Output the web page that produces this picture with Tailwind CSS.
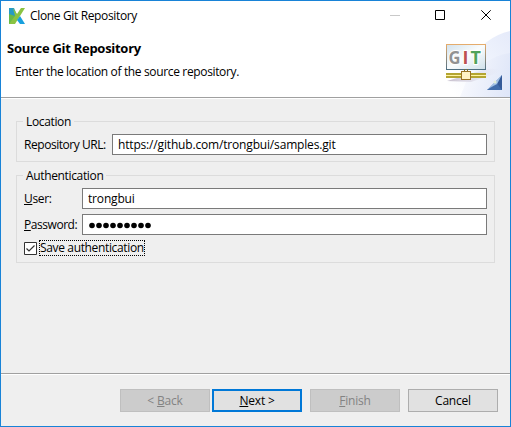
<!DOCTYPE html>
<html lang="en">
<head>
<meta charset="utf-8">
<title>Clone Git Repository</title>
<script src="https://cdn.jsdelivr.net/npm/@tailwindcss/browser@4"></script>
</head>
<body class="overflow-hidden">
<main class="w-[511px] h-[427px] border border-[#1883d7] bg-[#efefef] flex flex-col font-['Open_Sans','Noto_Sans',sans-serif] text-[12px] leading-4 text-black tracking-[-0.35px] whitespace-nowrap">
  <header class="relative h-[96px] shrink-0 bg-white">
    <svg class="absolute right-0 top-0" width="100" height="96" viewBox="410 1 100 96">
      <defs>
        <linearGradient id="sky" gradientUnits="userSpaceOnUse" x1="510" y1="35" x2="450" y2="90"><stop offset="0" stop-color="#e6ebfa"/><stop offset=".5" stop-color="#f1f5fd"/><stop offset="1" stop-color="#fff"/></linearGradient>
        <linearGradient id="sky2" gradientUnits="userSpaceOnUse" x1="510" y1="85" x2="466" y2="75"><stop offset="0" stop-color="#dfe6f8"/><stop offset="1" stop-color="#f5f7fd"/></linearGradient>
        <linearGradient id="screen" x1="0" y1="0" x2="1" y2="1"><stop offset="0" stop-color="#d3e2ed"/><stop offset=".5" stop-color="#f9fcfd"/><stop offset="1" stop-color="#cfe0ea"/></linearGradient>
        <linearGradient id="edge" x1="0" y1="0" x2="0" y2="1"><stop offset="0" stop-color="#e5ac6c"/><stop offset="1" stop-color="#507085"/></linearGradient>
        <linearGradient id="shadow"><stop offset="0" stop-color="#c5bdcc"/><stop offset="1" stop-color="#dfdeed" stop-opacity="0"/></linearGradient>
        <linearGradient id="blue" x1="0" y1="0" x2="1" y2="1"><stop offset="0" stop-color="#c2daf5"/><stop offset="1" stop-color="#2456a0"/></linearGradient>
      </defs>
      <path d="M510 31Q484 37 470 62Q452 80 430 97H510Z" fill="url(#sky)"/>
      <path d="M510 53Q484 57 466 82L460 97H510Z" fill="url(#sky2)"/>
      <path d="M447 81L487 69Q506 68 497 73L471 82Z" fill="url(#shadow)"/>
      <rect x="446.5" y="44.5" width="39" height="25" fill="url(#screen)" stroke="url(#edge)"/>
      <path d="M446 69.5H486" stroke="#4e6e80"/>
      <g font-family="Open Sans" font-size="18" font-weight="700" stroke="white" stroke-width="2" paint-order="stroke" letter-spacing="0">
        <text x="448.5" y="63.5" textLength="12" lengthAdjust="spacingAndGlyphs" fill="#929292">G</text><text x="462.5" y="63.5" fill="#bd5151">I</text><text x="470.5" y="63.5" fill="#51a35b">T</text>
      </g>
      <path d="M446 73H486V78H446Z" fill="#b4a532"/><path d="M446 75.5H486" stroke="#fff3a0"/>
      <path d="M464.5 69V72M467.5 69V72" stroke="#827126"/>
      <rect x="461.5" y="71.5" width="9" height="8" fill="#fff2c6" stroke="#9b7427"/>
      <path d="M502 75V90H487Z" fill="url(#blue)"/><path d="M502 75L497 84L502 90Z" fill="#355a98"/><path d="M487 90L497 84L502 90Z" fill="#416dab"/><path d="M501 76L489 88L497 84Z" fill="#a3c1e4"/><circle cx="495" cy="82" r="1.5" fill="#e2efd8"/>
    </svg>
    <div class="relative h-[30px] flex items-center">
      <svg class="ml-2" width="16" height="16" viewBox="0 0 16 16"><path d="M0 0H5L8 7L0 15Z" fill="#269bc5"/><path d="M0 6L6 8L5 16H0Z" fill="#68b848"/><path d="M4 0L8 6L12 0H16L6 16H0L6 8Z" fill="#8ac343"/><path d="M11 8L16 16H11L8 12Z" fill="#18a0de"/></svg>
      <span class="ml-[5px]">Clone Git Repository</span>
      <svg class="absolute right-0 top-0" width="140" height="29" viewBox="371 1 140 29" fill="none"><path d="M391 15.5H401" stroke="#c9c9c9"/><path d="M436.5 10.5H445.5V19.5H436.5Z" stroke="#000"/><path d="M482.3 10.3L491.7 19.7M491.7 10.3L482.3 19.7" stroke="#000"/></svg>
    </div>
    <h1 class="relative pl-[6px] mt-[9px] text-[13px] font-bold tracking-[-0.28px]">Source Git Repository</h1>
    <p class="relative pl-[14px] mt-2">Enter the location of the source repository.</p>
  </header>
  <div class="h-[2px] shrink-0 border-t border-[#a0a0a0] bg-white"></div>
  <form class="h-[274px] shrink-0 pt-[22px] pl-[15px] pr-[15px]">
    <section class="relative h-[41px] border border-[#dcdcdc] px-[7px] pt-3">
      <h2 class="absolute left-[6px] -top-2 bg-[#efefef] px-[3px]">Location</h2>
      <label class="flex items-center"><span class="w-[88px] tracking-[-0.45px]">Repository URL:</span><input class="w-[375px] h-[21px] border border-[#7a7a7a] bg-white px-[5px] tracking-[-0.17px] outline-none" value="https://github.com/trongbui/samples.git"></label>
    </section>
    <section class="relative mt-[13px] h-[88px] border border-[#dcdcdc] px-[7px] pt-3">
      <h2 class="absolute left-[6px] -top-2 bg-[#efefef] px-[3px]">Authentication</h2>
      <label class="flex items-center"><span class="w-[58px]"><u>U</u>ser:</span><input class="w-[405px] h-[21px] border border-[#7a7a7a] bg-white px-[5px] tracking-[-0.17px] outline-none" value="trongbui"></label>
      <label class="mt-[5px] flex items-center"><span class="w-[58px] tracking-[-0.45px]"><u>P</u>assword:</span><span class="flex w-[405px] h-[21px] items-center border border-[#7a7a7a] bg-white pl-[6px] pt-px">
        <svg width="63" height="7" viewBox="0 0 63 7"><g fill="#000"><circle cx="3" cy="3.5" r="2.8"/><circle cx="10" cy="3.5" r="2.8"/><circle cx="17" cy="3.5" r="2.8"/><circle cx="24" cy="3.5" r="2.8"/><circle cx="31" cy="3.5" r="2.8"/><circle cx="38" cy="3.5" r="2.8"/><circle cx="45" cy="3.5" r="2.8"/><circle cx="52" cy="3.5" r="2.8"/><circle cx="59" cy="3.5" r="2.8"/></g></svg></span></label>
      <div class="mt-[5px] flex items-center"><svg width="13" height="13" viewBox="0 0 13 13"><path d="M.5.5H12.5V12.5H.5Z" fill="#fff" stroke="#333"/><path d="M2.5 6.5L5 9L10.5 3.5" fill="none" stroke="#333" stroke-width="1.2"/></svg><span class="ml-[2px] w-[106px] h-4 leading-[14px] border border-dotted border-black">Save authentication</span></div>
    </section>
  </form>
  <div class="h-[2px] shrink-0 border-t border-[#a0a0a0] bg-white"></div>
  <footer class="flex h-[51px] pl-[119px] pt-[14px] tracking-[-0.2px]">
    <button class="w-[90px] h-[23px] border border-[#bfbfbf] bg-[#ccc] text-[#838383]">&lt; <u>B</u>ack</button>
    <button class="ml-[2px] w-[90px] h-[23px] border-2 border-[#0078d7] bg-[#e1e1e1]"><u>N</u>ext &gt;</button>
    <button class="ml-2 w-[90px] h-[23px] border border-[#bfbfbf] bg-[#ccc] text-[#838383]"><u>F</u>inish</button>
    <button class="ml-2 w-[90px] h-[23px] border border-[#adadad] bg-[#e1e1e1]">Cancel</button>
  </footer>
</main>
</body>
</html>
